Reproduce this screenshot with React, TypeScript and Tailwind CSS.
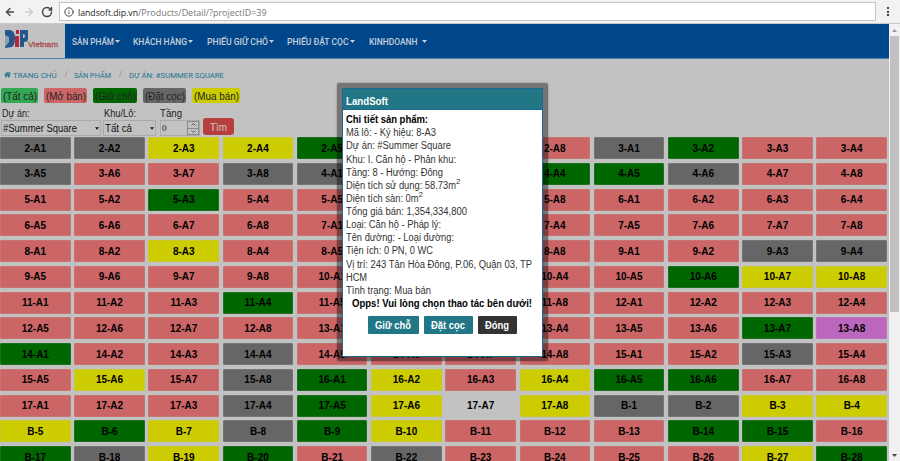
import { useState } from "react";
import { ArrowLeft, ArrowRight, Info, RotateCw } from "lucide-react";
import { FaHome } from "react-icons/fa";

const COLORS: Record<string, string> = {
  R: "bg-[#cc6666] border-[#c87272]",
  D: "bg-[#666666] border-[#757575]",
  Y: "bg-[#cccc00] border-[#c9c92a]",
  G: "bg-[#006600] border-[#1d701d]",
  P: "bg-[#bd66bd] border-[#bd75bd]",
  N: "bg-transparent border-transparent",
};

// one letter per unit, 12 units in a row
const STATUS = [
  "DDYYGRRRDGRR",
  "DRRDDRRGGDRR",
  "RRGRRRRRRRRR",
  "RRRRRRRRRRRR",
  "RRYRRRRRRRDD",
  "RRRRRRRRRGYY",
  "RRRGRRRRRRRR",
  "RRRRRRRRRRGP",
  "GRRDRRRRRRDR",
  "RYRDGYRYGGRR",
  "RRRDGYNYDDYY",
  "YGYDGYRRRGGR",
  "GDYGRDRRRRYG",
].join("");

const FLOORS = 16;

function unitName(i: number) {
  if (i >= FLOORS * 8) return `B-${i - FLOORS * 8 + 1}`;
  return `${Math.floor(i / 8) + 2}-A${(i % 8) + 1}`;
}

const MENU = [
  { label: "SẢN PHẨM", width: "w-[61px]", text: 42 },
  { label: "KHÁCH HÀNG", width: "w-[73.5px]", text: 54 },
  { label: "PHIẾU GIỮ CHỖ", width: "w-[80.5px]", text: 61 },
  { label: "PHIẾU ĐẶT CỌC", width: "w-[82px]", text: 61.5 },
  { label: "KINHDOANH ", width: "w-[70px]", text: 48.5 },
];

const LEGEND = [
  { label: "(Tất cả)", cls: "bg-[#33a852] w-[37px]", text: 34 },
  { label: "(Mở bán)", cls: "bg-[#cc6666] w-[43px]", text: 40 },
  { label: "(Giữ chỗ)", cls: "bg-[#006600] w-[44px]", text: 41 },
  { label: "(Đặt cọc)", cls: "bg-[#666666] w-[43px]", text: 40 },
  { label: "(Mua bán)", cls: "bg-[#cccc00] w-[48px]", text: 45 },
];

const DETAILS = [
  { text: "Mã lô: - Ký hiệu: 8-A3", len: 90 },
  { text: "Dự án: #Summer Square", len: 105 },
  { text: "Khu: I. Căn hộ - Phân khu:", len: 110 },
  { text: "Tầng: 8 - Hướng: Đông", len: 97 },
  { text: "Diện tích sử dụng: 58.73m", sup: true, len: 110 },
  { text: "Diện tích sàn: 0m", sup: true, len: 72.5 },
  { text: "Tổng giá bán: 1,354,334,800", len: 121 },
  { text: "Loại: Căn hộ - Pháp lý:", len: 95 },
  { text: "Tên đường: - Loại đường:", len: 108 },
  { text: "Tiện ích: 0 PN, 0 WC", len: 87 },
  { text: "Vị trí: 243 Tân Hòa Đông, P.06, Quận 03, TP", len: 186 },
  { text: "HCM", len: 21 },
  { text: "Tình trạng: Mua bán", len: 85 },
];

// single line of text held to a fixed length
function Fit({ text, len, className = "" }: { text: string; len: number; className?: string }) {
  return (
    <svg className={`block h-[14px] shrink-0 overflow-visible ${className}`} width={len} height="14">
      <text x="0" y="10.5" fill="currentColor" textLength={len} lengthAdjust="spacingAndGlyphs">{text}</text>
    </svg>
  );
}

function Caret({ className = "" }: { className?: string }) {
  return (
    <svg className={`shrink-0 ${className}`} width="5" height="3" viewBox="0 0 5 3" fill="currentColor">
      <path d="M0 0h5L2.5 3z" />
    </svg>
  );
}

function Logo() {
  return (
    <div className="flex h-[34px] w-[65px] shrink-0 items-start bg-[#c2c2c2] pl-[5px] pt-[5px]">
      <svg width="23" height="20" viewBox="0 0 23 20">
        <path d="M0 1h4q6 0 6 8 0 7-3 9l-7 1z" fill="#24558c" />
        <path d="M0 6l4 2v5l-4 5z" fill="#91a1b2" />
        <path d="M11 1h3v4h-3zM10 7h4v11h-4z" fill="#b92637" />
        <path d="M15 1h8v9q0 3-4 3v5h-4zM18 5v4q2 0 2-2t-2-2z" fill="#24558c" fillRule="evenodd" />
      </svg>
      <span className="mt-[10px] text-[#a65050]">
        <svg className="block overflow-visible" width="30" height="10">
          <text x="0" y="8" fill="currentColor" stroke="currentColor" strokeWidth="0.3" fontSize="8" textLength="30" lengthAdjust="spacingAndGlyphs">Vietnam</text>
        </svg>
      </span>
    </div>
  );
}

function Browser() {
  return (
    <div className="flex h-6 shrink-0 items-center border-b border-[#c9c9c9] bg-[#f2f2f2] pl-1">
      <ArrowLeft className="size-3 text-[#444]" strokeWidth={2.8} />
      <ArrowRight className="ml-[7px] size-3 text-[#ccc]" strokeWidth={2.8} />
      <RotateCw className="ml-[6px] size-3 text-[#444]" strokeWidth={2.8} />
      <div className="ml-[6px] flex h-[19px] w-[817px] items-center border border-[#c4c4c4] bg-white pl-1">
        <Info className="size-[10px] text-[#444]" strokeWidth={2.3} />
        <div className="ml-[4px] flex font-['Open_Sans',sans-serif] text-[9.2px] leading-none">
          <span className="text-[#222]"><Fit text="landsoft.dip.vn" len={60} /></span>
          <span className="text-[#777]"><Fit text="/Products/Detail/?projectID=39" len={128.5} /></span>
        </div>
      </div>
      <div className="ml-[11px] flex flex-col gap-[1.5px]">
        <i className="size-[2px] bg-[#444]" />
        <i className="size-[2px] bg-[#444]" />
        <i className="size-[2px] bg-[#444]" />
      </div>
    </div>
  );
}

function Filters() {
  return (
    <div className="flex h-[31px] shrink-0 pl-px text-[10px] leading-[12px] text-[#222]">
      <label className="w-[102px]">
        <span className="flex h-[13px] items-center pl-px"><Fit text="Dự án:" len={27.5} /></span>
        <span className="mt-[1px] flex h-4 w-[100px] items-center justify-between border border-[#aaa] pl-[1px] pr-[1px] text-[#111]">
          <Fit text="#Summer Square" len={74} /> <Caret className="w-[4px]" />
        </span>
      </label>
      <label className="w-[57px]">
        <span className="flex h-[13px] items-center pl-px"><Fit text="Khu/Lô:" len={32} /></span>
        <span className="mt-[1px] flex h-4 w-[53px] items-center justify-between border border-[#aaa] pl-[1px] pr-[1px] text-[#111]">
          <Fit text="Tất cả" len={27} /> <Caret className="w-[4px]" />
        </span>
      </label>
      <label className="w-[43px]">
        <span className="flex h-[13px] items-center"><Fit text="Tầng" len={22} /></span>
        <span className="mt-[1px] flex h-4 w-[40px] items-center justify-between border border-[#aaa] pl-px font-['Liberation_Serif',serif] text-[9px]">
          0
          <span className="flex h-full w-[12px] flex-col border border-[#888]">
            <i className="flex flex-1 items-center justify-center border-b border-[#888]">
              <svg width="5" height="3" fill="none" stroke="#555"><path d="M.5 2.5l2-2 2 2" /></svg>
            </i>
            <i className="flex flex-1 items-center justify-center">
              <svg width="5" height="3" fill="none" stroke="#555"><path d="M.5.5l2 2 2-2" /></svg>
            </i>
          </span>
        </span>
      </label>
      <button className="mt-[12px] flex h-[17px] w-[31px] items-center justify-center rounded-[3px] bg-[#b53f3c] text-[#d4c4c4]">
        <Fit text="Tìm" len={17} />
      </button>
    </div>
  );
}

function Dialog({ onClose }: { onClose: () => void }) {
  return (
    <div className="absolute left-[337px] top-[83px] h-[278px] w-[211px] rounded-[2px] bg-black/40 p-[5px] shadow-[0_0_2px_rgba(0,0,0,0.4)]">
      <div className="h-[269px] border border-[#20668f] bg-white text-[10px] text-[#333]">
        <div className="flex h-[21px] items-center border-b border-[#20668f] bg-[#217786] pl-[3px] pt-[3px] font-bold text-white">
          <Fit text="LandSoft" len={42} />
        </div>
        <div className="px-[3px] pt-[2.5px]">
          <div className="flex h-[13.15px] items-center font-bold text-black">
            <Fit text="Chi tiết sản phẩm:" len={82} />
          </div>
          {DETAILS.map((d) => (
            <div key={d.text} className="flex h-[13.15px] items-center">
              <Fit text={d.text} len={d.len} />
              {d.sup && <span className="mb-[5px] text-[8px] leading-none">2</span>}
            </div>
          ))}
          <div className="flex h-[13.15px] items-center pl-[6px] font-bold text-black">
            <Fit text="Opps! Vui lòng chọn thao tác bên dưới!" len={180} />
          </div>
          <div className="mt-[6px] flex justify-center gap-[5px] pr-px font-bold text-white">
            <button className="flex h-[18px] w-[51px] items-center justify-center rounded-[1px] bg-[#217786]">
              <Fit text="Giữ chỗ" len={36} />
            </button>
            <button className="flex h-[18px] w-[49px] items-center justify-center rounded-[1px] bg-[#217786]">
              <Fit text="Đặt cọc" len={34} />
            </button>
            <button onClick={onClose} className="flex h-[18px] w-[39px] items-center justify-center rounded-[1px] bg-[#333]">
              <Fit text="Đóng" len={24} />
            </button>
          </div>
        </div>
      </div>
    </div>
  );
}

export default function App() {
  const [open, setOpen] = useState(true);

  return (
    <div className="relative flex h-[461px] w-[900px] flex-col overflow-hidden bg-[#c2c2c2] font-['Liberation_Sans',Arial,sans-serif]">
      <Browser />
      <div className="flex min-h-0 flex-1">
        <main className="flex w-[889px] flex-col overflow-hidden">
          <nav className="flex h-[35px] shrink-0 items-center border-b border-[#4f83ae] bg-[#00468a]">
            <Logo />
            <div className="flex pl-[7px] font-[Roboto,sans-serif] text-[8.5px] font-medium text-[#c6d0da]">
              {MENU.map((m) => (
                <div key={m.label} className={`flex items-center ${m.width}`}>
                  <Fit text={m.label.trim()} len={m.text} />
                  <Caret className={m.label.endsWith(" ") ? "ml-[4px] mt-px" : "ml-px mt-px"} />
                </div>
              ))}
            </div>
          </nav>

          <div className="flex h-[29px] shrink-0 items-center pl-1 font-[Roboto,sans-serif] text-[8px] text-[#217492]">
            <FaHome className="mt-px size-[7px]" />
            <Fit text="TRANG CHỦ" len={43.5} className="ml-[2px]" />
            <span className="ml-[8px] text-[#888]">/</span>
            <Fit text="SẢN PHẨM" len={37} className="ml-[6px]" />
            <span className="ml-[8px] text-[#888]">/</span>
            <Fit text="DỰ ÁN: #SUMMER SQUARE" len={95} className="ml-[7px]" />
          </div>

          <div className="flex h-[18px] shrink-0 gap-[6px] pl-px text-[10px] text-[#222]">
            {LEGEND.map((l) => (
              <span key={l.label} className={`flex h-[15px] items-center justify-center rounded-[2px] ${l.cls}`}>
                <Fit text={l.label} len={l.text} />
              </span>
            ))}
          </div>

          <Filters />

          <div className="grid w-[887px] grid-cols-12 gap-x-[3.6px] gap-y-[3.75px]">
            {STATUS.split("").map((s, i) => (
              <div key={i} className={`flex h-[22px] items-center justify-center rounded-[1px] border text-[10px] font-bold text-black ${COLORS[s]}`}>
                {unitName(i)}
              </div>
            ))}
          </div>
        </main>

        <aside className="flex w-[11px] flex-col items-center bg-[#f1f1f1]">
          <Caret className="mt-[5px] rotate-180 text-[#999]" />
          <div className="mt-[4px] h-[276px] w-[9px] bg-[#c1c1c1]" />
          <Caret className="mt-auto mb-[4px] text-[#444]" />
        </aside>
      </div>
      {open && <Dialog onClose={() => setOpen(false)} />}
    </div>
  );
}
